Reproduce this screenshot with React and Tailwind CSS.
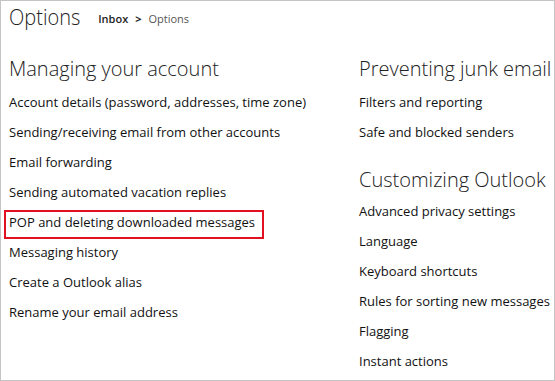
import React from 'react'

const accountLinks = [
  'Account details (password, addresses, time zone)',
  'Sending/receiving email from other accounts',
  'Email forwarding',
  'Sending automated vacation replies',
  'POP and deleting downloaded messages',
  'Messaging history',
  'Create a Outlook alias',
  'Rename your email address',
]

const junkLinks = ['Filters and reporting', 'Safe and blocked senders']

const customizeLinks = [
  'Advanced privacy settings',
  'Language',
  'Keyboard shortcuts',
  'Rules for sorting new messages',
  'Flagging',
  'Instant actions',
]

function LinkRow({ label, highlight }) {
  return (
    <div className="relative h-[30px] flex items-center text-[13px] text-[#111] whitespace-nowrap">
      {label}
      {highlight && (
        <div className="absolute left-[-5px] top-[2px] w-[260px] h-[29px] border-2 border-[#e3111f]"></div>
      )}
    </div>
  )
}

function Heading({ children, className = '' }) {
  return (
    <h2 className={`text-[20px] leading-[22px] font-light text-[#222] whitespace-nowrap ${className}`}>
      {children}
    </h2>
  )
}

export default function App() {
  return (
    <div
      className="w-[555px] h-[381px] bg-white border border-[#c4c4c4] overflow-hidden"
      style={{ fontFamily: '"Open Sans", "Noto Sans", sans-serif' }}
    >
      {/* Header */}
      <div className="h-[45px] pl-[8px] flex items-start pt-[2px]">
        <h1 className="text-[20px] leading-[26px] font-light text-[#222] scale-y-110 origin-top">Options</h1>
        <div className="ml-[18px] mt-[8px] flex items-center text-[11px] gap-[7px]">
          <span className="font-semibold text-[#222]">Inbox</span>
          <span className="font-bold text-[#222]">&gt;</span>
          <span className="text-[#555]">Options</span>
        </div>
      </div>

      <div className="flex pl-[8px]">
        {/* Left column */}
        <div className="w-[350px]">
          <Heading className="pt-[12px] pb-[8px]">Managing your account</Heading>
          {accountLinks.map((l) => (
            <LinkRow key={l} label={l} highlight={l.startsWith('POP')} />
          ))}
        </div>

        {/* Right column */}
        <div>
          <Heading className="pt-[12px] pb-[8px]">Preventing junk email</Heading>
          {junkLinks.map((l) => (
            <LinkRow key={l} label={l} />
          ))}
          <Heading className="pt-[21px] pb-[6px]">Customizing Outlook</Heading>
          {customizeLinks.map((l) => (
            <LinkRow key={l} label={l} />
          ))}
        </div>
      </div>
    </div>
  )
}
